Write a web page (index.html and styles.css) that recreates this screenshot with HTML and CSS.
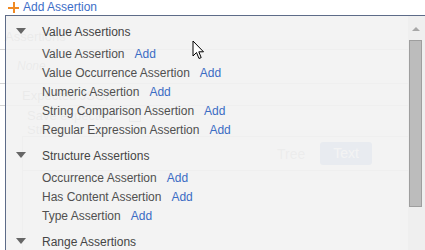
FILE: index.html
```html
<!DOCTYPE html>
<html lang="en">
  <head>
    <meta charset="UTF-8">
    <link rel="stylesheet" href="styles.css">
  </head>
  <body>
    <div class="toolbar">
      <span class="plus"></span>
      <a class="add-link">Add Assertion</a>
    </div>

    <!-- form behind the popup -->
    <div class="backdrop">
      <div class="bd-title">Assertions</div>
      <div class="bd-none">None</div>
      <div class="bd-label">Expected JSON:</div>
      <div class="bd-save">Save expected: <span class="bd-check"></span></div>
      <div class="bd-str">String</div>
      <div class="bd-box">
        <div class="bd-tabs">
          <span class="bd-tree">Tree</span>
          <span class="bd-text">Text</span>
        </div>
      </div>
    </div>

    <div class="dropdown">
      <div class="list">
        <div class="group">
          <div class="group-head"><span class="caret"></span>Value Assertions</div>
          <div class="item"><span>Value Assertion</span><a class="add">Add</a></div>
          <div class="item"><span>Value Occurrence Assertion</span><a class="add">Add</a></div>
          <div class="item"><span>Numeric Assertion</span><a class="add">Add</a></div>
          <div class="item"><span>String Comparison Assertion</span><a class="add">Add</a></div>
          <div class="item"><span>Regular Expression Assertion</span><a class="add">Add</a></div>
        </div>
        <div class="group">
          <div class="group-head"><span class="caret"></span>Structure Assertions</div>
          <div class="item"><span>Occurrence Assertion</span><a class="add">Add</a></div>
          <div class="item"><span>Has Content Assertion</span><a class="add">Add</a></div>
          <div class="item"><span>Type Assertion</span><a class="add">Add</a></div>
        </div>
        <div class="group">
          <div class="group-head"><span class="caret"></span>Range Assertions</div>
        </div>
      </div>
      <div class="scrollbar">
        <div class="sb-up"><span class="sb-arrow"></span></div>
        <div class="sb-thumb"></div>
      </div>
    </div>

    <svg class="cursor" width="13" height="20" viewBox="0 0 13 20">
      <path d="M1 1 L1 16 L4.5 12.5 L7 18.5 L9.2 17.6 L6.8 11.8 L11.5 11.8 Z" fill="#fff" stroke="#000" stroke-width="1" stroke-linejoin="miter"/>
    </svg>
  </body>
</html>
```

FILE: styles.css
```css
body {
  margin: 0;
  background: #fff;
  font-family: "Liberation Sans", Arial, sans-serif;
  font-size: 12px;
  overflow: hidden;
  width: 425px;
  height: 250px;
  position: relative;
}

.toolbar {
  height: 15px;
  display: flex;
  align-items: center;
  padding-left: 8px;
}

.plus {
  width: 11px;
  height: 11px;
  margin-right: 4px;
  background:
    linear-gradient(#f08a24, #f08a24) center / 11px 2px no-repeat,
    linear-gradient(#f08a24, #f08a24) center / 2px 11px no-repeat;
}

.add-link {
  color: #3d6ec8;
  line-height: 15px;
}

/* faded form under the popup */
.backdrop {
  color: #a4a4a4;
}
.bd-title {
  font-size: 13px;
  padding: 12px 0 0 5px;
  height: 22px;
  line-height: 20px;
  border-bottom: 1px solid #d4d4d4;
}
.bd-none {
  font-style: italic;
  padding-left: 17px;
  height: 33px;
  line-height: 33px;
  border-bottom: 1px solid #d4d4d4;
}
.bd-label {
  padding-left: 22px;
  height: 21px;
  line-height: 24px;
  border-bottom: 1px solid #d4d4d4;
  font-size: 13px;
}
.bd-save {
  padding-left: 27px;
  height: 20px;
  line-height: 20px;
  display: flex;
  align-items: center;
  font-size: 13px;
}
.bd-check {
  width: 10px;
  height: 10px;
  border: 1px solid #aaa;
  margin-left: 12px;
}
.bd-str {
  padding-left: 27px;
  height: 10px;
  line-height: 8px;
  overflow: hidden;
  font-size: 13px;
}
.bd-box {
  margin-left: 22px;
  border-left: 1px solid #d4d4d4;
  border-top: 1px solid #d4d4d4;
  height: 120px;
}
.bd-tabs {
  height: 33px;
  border-bottom: 1px solid #d4d4d4;
  display: flex;
  align-items: center;
  padding-left: 254px;
  font-size: 14px;
}
.bd-tree {
  color: #b4b4b4;
  width: 43px;
}
.bd-text {
  background: #8eacde;
  color: #fff;
  border-radius: 3px;
  width: 52px;
  height: 23px;
  line-height: 23px;
  text-align: center;
}

/* popup */
.dropdown {
  position: absolute;
  left: 5px;
  top: 15px;
  width: 420px;
  height: 245px;
  border-left: 1px solid #5d6b88;
  border-top: 1px solid #5d6b88;
  background: rgba(242, 242, 242, 0.9);
  display: flex;
}

.list {
  flex: 1;
  padding-top: 6px;
}

.group + .group {
  margin-top: 6px;
}

.group-head {
  display: flex;
  align-items: center;
  height: 20px;
  padding-left: 10px;
  color: #454545;
  margin-bottom: 3px;
}

.caret {
  width: 0;
  height: 0;
  border-left: 5px solid transparent;
  border-right: 5px solid transparent;
  border-top: 6px solid #666;
  margin: -3px 16px 0 0;
}

.item {
  height: 19px;
  line-height: 19px;
  padding-left: 36px;
  color: #505050;
}

.add {
  color: #3b6cc4;
  margin-left: 10px;
}

.scrollbar {
  width: 18px;
  background: #efefef;
  display: flex;
  flex-direction: column;
}

.sb-up {
  height: 24px;
  display: flex;
  align-items: center;
  justify-content: center;
}

.sb-arrow {
  width: 0;
  height: 0;
  border-left: 4px solid transparent;
  border-right: 4px solid transparent;
  border-bottom: 4px solid #a8a8a8;
  margin: 2px 2px 0 0;
}

.sb-thumb {
  margin-left: 1px;
  width: 11px;
  height: 165px;
  background: #bcbcbc;
  border: 1px solid #9e9e9e;
}

.cursor {
  position: absolute;
  left: 192px;
  top: 40px;
}
```
